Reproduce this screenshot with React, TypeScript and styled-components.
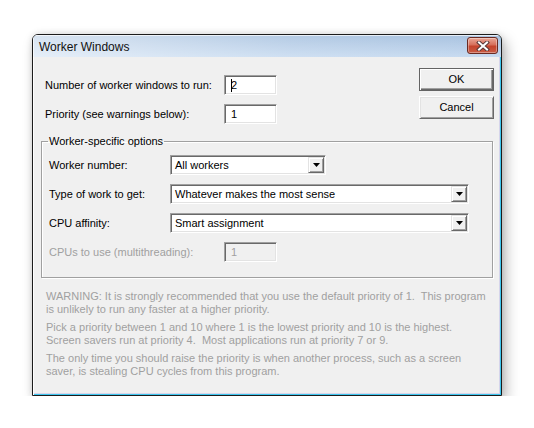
import styled, { createGlobalStyle } from "styled-components";

const GlobalStyle = createGlobalStyle`
  html, body {
    margin: 0;
    padding: 0;
    background: #ffffff;
  }
  body {
    font-family: "Liberation Sans", Arial, sans-serif;
    font-size: 11px;
  }
`;

// each note is kept on the same two lines as the original dialog
const warnings = [
  [
    "WARNING: It is strongly recommended that you use the default priority of 1.\u00a0 This program",
    "is unlikely to run any faster at a higher priority.",
  ],
  [
    "Pick a priority between 1 and 10 where 1 is the lowest priority and 10 is the highest.",
    "Screen savers run at priority 4.\u00a0 Most applications run at priority 7 or 9.",
  ],
  [
    "The only time you should raise the priority is when another process, such as a screen",
    "saver, is stealing CPU cycles from this program.",
  ],
];

function CloseGlyph() {
  return (
    <svg width="14" height="10" viewBox="0 0 14 10">
      <path d="M3 1.5 L11 8.5 M11 1.5 L3 8.5" stroke="#5a3a3a" strokeWidth="4" strokeLinecap="square" />
      <path d="M3 1.5 L11 8.5 M11 1.5 L3 8.5" stroke="#ffffff" strokeWidth="2" strokeLinecap="square" />
    </svg>
  );
}

function ComboBox({ value, width }: { value: string; width: number }) {
  return (
    <Combo style={{ width }}>
      <ComboText>{value}</ComboText>
      <DropButton>
        <svg width="7" height="4" viewBox="0 0 7 4">
          <path d="M0 0 H7 L3.5 4 Z" fill="#000" />
        </svg>
      </DropButton>
    </Combo>
  );
}

export default function App() {
  return (
    <>
      <GlobalStyle />
      <Window>
        <TitleBar>
          <Title>Worker Windows</Title>
          <CloseButton>
            <CloseGlyph />
          </CloseButton>
        </TitleBar>
        <Body>
          <TopSection>
            <Fields>
              <Row>
                <Label $width={179}>Number of worker windows to run:</Label>
                <TextBox>
                  <Caret />2
                </TextBox>
              </Row>
              <Row>
                <Label $width={179}>Priority (see warnings below):</Label>
                <TextBox>1</TextBox>
              </Row>
            </Fields>
            <Buttons>
              <PushButton $default>OK</PushButton>
              <PushButton>Cancel</PushButton>
            </Buttons>
          </TopSection>

          <GroupBox>
            <GroupLabel>Worker-specific options</GroupLabel>
            <Row>
              <Label $width={121}>Worker number:</Label>
              <ComboBox value="All workers" width={156} />
            </Row>
            <Row>
              <Label $width={121}>Type of work to get:</Label>
              <ComboBox value="Whatever makes the most sense" width={299} />
            </Row>
            <Row>
              <Label $width={121}>CPU affinity:</Label>
              <ComboBox value="Smart assignment" width={299} />
            </Row>
            <Row>
              <Label $width={175} $disabled>
                CPUs to use (multithreading):
              </Label>
              <TextBox $disabled>1</TextBox>
            </Row>
          </GroupBox>

          <Notes>
            {warnings.map((lines) => (
              <Note key={lines[0]}>
                {lines.map((l) => (
                  <NoteLine key={l}>{l}</NoteLine>
                ))}
              </Note>
            ))}
          </Notes>
        </Body>
      </Window>
    </>
  );
}

const Window = styled.div`
  box-sizing: border-box;
  margin: 34px 0 0 32px;
  width: 470px;
  height: 362px;
  display: flex;
  flex-direction: column;
  background: #f0f0f0;
  border: 1px solid #1c1c1c;
  border-radius: 6px 6px 0 0;
  box-shadow: inset 1px 0 0 #ffffff, inset -1px -1px 0 #3cc6ee,
    inset -2px -2px 0 #d6d4ea, 4px 6px 14px rgba(0, 0, 0, 0.28),
    0 0 6px rgba(0, 0, 0, 0.12);
  overflow: hidden;
`;

const TitleBar = styled.div`
  height: 22px;
  flex: none;
  display: flex;
  align-items: flex-start;
  justify-content: space-between;
  padding: 0 3px 0 6px;
  background: linear-gradient(
      to right,
      rgba(255, 255, 255, 0.55),
      rgba(255, 255, 255, 0.15) 55%,
      rgba(255, 255, 255, 0)
    ),
    linear-gradient(to bottom, #a7c1df, #c6daf0);
  box-shadow: inset 1px 1px 0 rgba(255, 255, 255, 0.7);
`;

const Title = styled.span`
  font-size: 12px;
  line-height: 14px;
  margin-top: 5px;
  color: #111;
`;

const CloseButton = styled.div`
  box-sizing: border-box;
  width: 31px;
  height: 17px;
  margin-top: 2px;
  display: flex;
  align-items: center;
  justify-content: center;
  border: 1px solid #6a2a22;
  border-radius: 3px;
  background: linear-gradient(
    to bottom,
    #e9a797 0%,
    #d7705c 45%,
    #c4432c 55%,
    #c95c45 100%
  );
  box-shadow: inset 0 0 0 1px rgba(255, 255, 255, 0.35);
`;

const Body = styled.div`
  flex: 1;
  display: flex;
  flex-direction: column;
`;

const TopSection = styled.div`
  display: flex;
  justify-content: space-between;
  align-items: flex-start;
`;

const Fields = styled.div`
  display: flex;
  flex-direction: column;
  row-gap: 9px;
  padding: 18px 0 0 12px;
`;

const Row = styled.div`
  display: flex;
  align-items: center;
  height: 20px;
`;

const Label = styled.span<{ $width: number; $disabled?: boolean }>`
  width: ${(p) => p.$width}px;
  flex: none;
  line-height: 13px;
  color: ${(p) => (p.$disabled ? "#a0a0a0" : "#000")};
  white-space: nowrap;
`;

const Sunken = styled.div`
  box-sizing: border-box;
  height: 20px;
  border-style: solid;
  border-width: 1px;
  border-color: #a0a0a0 #ffffff #ffffff #a0a0a0;
  box-shadow: inset 1px 1px 0 #696969, inset -1px -1px 0 #e3e3e3;
`;

const TextBox = styled(Sunken)<{ $disabled?: boolean }>`
  width: 53px;
  display: flex;
  align-items: center;
  padding-left: 6px;
  background: ${(p) => (p.$disabled ? "#f0f0f0" : "#fff")};
  color: ${(p) => (p.$disabled ? "#a0a0a0" : "#000")};
  line-height: 13px;
`;

const Caret = styled.span`
  display: inline-block;
  width: 1px;
  height: 13px;
  background: #000;
  margin-right: -1px;
`;

const Combo = styled(Sunken)`
  display: flex;
  align-items: stretch;
  background: #fff;
  padding: 1px;
`;

const ComboText = styled.span`
  flex: 1;
  display: flex;
  align-items: center;
  padding-left: 3px;
  line-height: 13px;
  color: #000;
  white-space: nowrap;
  overflow: hidden;
`;

const DropButton = styled.span`
  box-sizing: border-box;
  width: 16px;
  flex: none;
  display: flex;
  align-items: center;
  justify-content: center;
  background: #f0f0f0;
  border-style: solid;
  border-width: 1px;
  border-color: #e3e3e3 #696969 #696969 #e3e3e3;
  box-shadow: inset 1px 1px 0 #fff, inset -1px -1px 0 #a0a0a0;
`;

const Buttons = styled.div`
  display: flex;
  flex-direction: column;
  row-gap: 5px;
  padding: 11px 7px 0 0;
`;

const PushButton = styled.div<{ $default?: boolean }>`
  box-sizing: border-box;
  width: 75px;
  height: 23px;
  display: flex;
  align-items: center;
  justify-content: center;
  background: #f0f0f0;
  color: #000;
  line-height: 13px;
  border: 1px solid;
  border-color: ${(p) =>
    p.$default ? "#646464" : "#ffffff #696969 #696969 #ffffff"};
  box-shadow: ${(p) =>
    p.$default
      ? "inset 1px 1px 0 #fff, inset -1px -1px 0 #696969, inset -2px -2px 0 #a0a0a0"
      : "inset 1px 1px 0 #e3e3e3, inset -1px -1px 0 #a0a0a0"};
`;

const GroupBox = styled.fieldset`
  box-sizing: border-box;
  width: 452px;
  margin: 11px 0 0 8px;
  padding: 7px 7px 15px 7px;
  border: 1px solid #a0a0a0;
  box-shadow: inset 1px 1px 0 #fff, 1px 1px 0 #fff;
  display: flex;
  flex-direction: column;
  row-gap: 9px;
  min-width: 0;
`;

const GroupLabel = styled.legend`
  padding: 0 1px;
  margin-left: -1px;
  line-height: 13px;
  color: #000;
`;

const Notes = styled.div`
  margin: 12px 0 0 13px;
  display: flex;
  flex-direction: column;
  row-gap: 5px;
`;

const Note = styled.p`
  margin: 0;
  display: flex;
  flex-direction: column;
  color: #a0a0a0;
`;

const NoteLine = styled.span`
  line-height: 13px;
  white-space: nowrap;
`;
